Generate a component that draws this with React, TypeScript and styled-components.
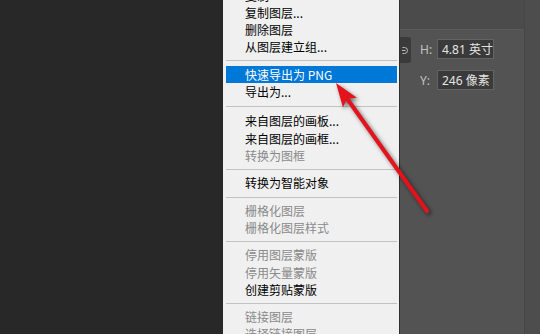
import React from "react";
import styled, { createGlobalStyle } from "styled-components";

const Global = createGlobalStyle`
  html, body {
    margin: 0;
    padding: 0;
    background: #282828;
  }
  body {
    width: 540px;
    height: 334px;
    overflow: hidden;
    font-family: "Noto Sans CJK SC", "Noto Sans", sans-serif;
  }
`;

const Screen = styled.div`
  position: relative;
  width: 540px;
  height: 334px;
  overflow: hidden;
  display: flex;
  background: #282828;
`;

const Canvas = styled.div`
  flex: 0 0 223px;
  background: #282828;
`;

const Menu = styled.div`
  flex: 0 0 177px;
  box-sizing: border-box;
  background: #f0f0f0;
  border-right: 1px solid #2e2e2e;
  padding: 0 2px 0 3px;
  overflow: hidden;
`;

const MenuList = styled.div`
  margin-top: -13.1px;
  display: flex;
  flex-direction: column;
`;

const Item = styled.div<{ $disabled?: boolean; $active?: boolean }>`
  flex: 0 0 17.2px;
  height: 17.2px;
  display: flex;
  align-items: center;
  padding-left: 19px;
  font-family: "Noto Sans CJK SC", sans-serif;
  font-size: 12px;
  line-height: 1;
  white-space: nowrap;
  color: ${(p) => (p.$active ? "#ffffff" : p.$disabled ? "#8a8a8a" : "#000000")};
  background: ${(p) => (p.$active ? "#0078d7" : "transparent")};
`;

const Separator = styled.div<{ $size?: number }>`
  flex: 0 0 ${(p) => p.$size ?? 10.3}px;
  display: flex;
  align-items: center;
  &::after {
    content: "";
    flex: 1;
    height: 1px;
    background: #c2c2c2;
  }
`;

const Panel = styled.div`
  flex: 1;
  display: flex;
  background: #535353;
`;

const PanelMain = styled.div`
  flex: 1;
  display: flex;
  flex-direction: column;
`;

const PanelTop = styled.div`
  height: 29px;
  background: #4b4b4b;
  border-bottom: 1px solid #5a5a5a;
`;

const Fields = styled.div`
  display: flex;
  padding-top: 9px;
`;

const LinkButton = styled.div`
  flex: 0 0 11px;
  height: 26px;
  margin-top: -2px;
  background: #3b3b3b;
  border-radius: 0 3px 3px 0;
  display: flex;
  align-items: center;
  justify-content: flex-start;
  padding-left: 2px;
  box-sizing: border-box;
`;

const FieldColumn = styled.div`
  margin-left: 9px;
  display: flex;
  flex-direction: column;
  gap: 11px;
`;

const FieldRow = styled.div`
  display: flex;
  align-items: center;
  height: 20px;
`;

const Label = styled.span`
  flex: 0 0 17px;
  font-family: "Noto Sans", sans-serif;
  font-size: 12px;
  color: #c2c2c2;
`;

const Input = styled.div`
  box-sizing: border-box;
  width: 57px;
  height: 20px;
  border: 1px solid #646464;
  background: #3a3a3a;
  color: #e4e4e4;
  padding-left: 4px;
  display: flex;
  align-items: center;
  font-family: "Noto Sans", "Noto Sans CJK SC", sans-serif;
  font-size: 12px;
  white-space: nowrap;
`;

const SideStrip = styled.div`
  flex: 0 0 15px;
  background: #4d4d4d;
  border-left: 1px solid #474747;
`;

const ArrowLayer = styled.svg`
  position: absolute;
  left: 0;
  top: 0;
  width: 540px;
  height: 334px;
  pointer-events: none;
  filter: drop-shadow(2px 2px 2px rgba(0, 0, 0, 0.55));
`;

type Entry =
  | { kind: "item"; label: string; disabled?: boolean; active?: boolean }
  | { kind: "sep"; size?: number };

const entries: Entry[] = [
  { kind: "item", label: "复制" },
  { kind: "item", label: "复制图层..." },
  { kind: "item", label: "删除图层" },
  { kind: "item", label: "从图层建立组..." },
  { kind: "sep" },
  { kind: "item", label: "快速导出为 PNG", active: true },
  { kind: "item", label: "导出为..." },
  { kind: "sep", size: 12.5 },
  { kind: "item", label: "来自图层的画板..." },
  { kind: "item", label: "来自图层的画框..." },
  { kind: "item", label: "转换为图框", disabled: true },
  { kind: "sep" },
  { kind: "item", label: "转换为智能对象" },
  { kind: "sep" },
  { kind: "item", label: "栅格化图层", disabled: true },
  { kind: "item", label: "栅格化图层样式", disabled: true },
  { kind: "sep" },
  { kind: "item", label: "停用图层蒙版", disabled: true },
  { kind: "item", label: "停用矢量蒙版", disabled: true },
  { kind: "item", label: "创建剪贴蒙版" },
  { kind: "sep" },
  { kind: "item", label: "链接图层", disabled: true },
  { kind: "item", label: "选择链接图层", disabled: true },
];

function Arrow() {
  const tail = { x: 427, y: 211 };
  const tip = { x: 336, y: 83 };
  const dx = tip.x - tail.x;
  const dy = tip.y - tail.y;
  const len = Math.hypot(dx, dy);
  const ux = dx / len;
  const uy = dy / len;
  const nx = -uy;
  const ny = ux;
  const headLen = 24;
  const half = 8.5;
  const bx = tip.x - headLen * ux;
  const by = tip.y - headLen * uy;
  const notchX = tip.x - 19 * ux;
  const notchY = tip.y - 19 * uy;
  const w1 = `${bx + half * nx},${by + half * ny}`;
  const w2 = `${bx - half * nx},${by - half * ny}`;
  return (
    <ArrowLayer viewBox="0 0 540 334">
      <line
        x1={tail.x}
        y1={tail.y}
        x2={notchX}
        y2={notchY}
        stroke="#e3121b"
        strokeWidth={4}
        strokeLinecap="round"
      />
      <polygon
        points={`${tip.x},${tip.y} ${w1} ${notchX},${notchY} ${w2}`}
        fill="#e3121b"
      />
    </ArrowLayer>
  );
}

export default function App() {
  return (
    <>
      <Global />
      <Screen>
        <Canvas />
        <Menu>
          <MenuList>
            {entries.map((e, i) =>
              e.kind === "sep" ? (
                <Separator key={i} $size={e.size} />
              ) : (
                <Item key={i} $disabled={e.disabled} $active={e.active}>
                  {e.label}
                </Item>
              )
            )}
          </MenuList>
        </Menu>
        <Panel>
          <PanelMain>
            <PanelTop />
            <Fields>
              <LinkButton>
                <svg width="6" height="9" viewBox="0 0 6 9">
                  <path
                    d="M0.5 1.5 H2.5 A3 3 0 0 1 2.5 7.5 H0.5 M0 4.5 H3.5"
                    fill="none"
                    stroke="#bdbdbd"
                    strokeWidth="1"
                  />
                </svg>
              </LinkButton>
              <FieldColumn>
                <FieldRow>
                  <Label>H:</Label>
                  <Input>4.81 英寸</Input>
                </FieldRow>
                <FieldRow>
                  <Label>Y:</Label>
                  <Input>246 像素</Input>
                </FieldRow>
              </FieldColumn>
            </Fields>
          </PanelMain>
          <SideStrip />
        </Panel>
        <Arrow />
      </Screen>
    </>
  );
}
